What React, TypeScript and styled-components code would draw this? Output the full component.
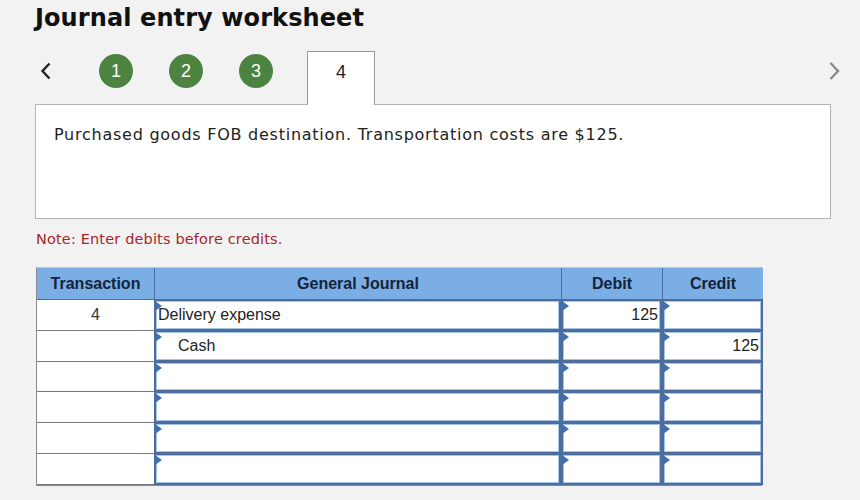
import styled, { createGlobalStyle } from 'styled-components';

const GlobalStyle = createGlobalStyle`
    html, body {
        margin: 0;
        padding: 0;
        background: #f2f2f2;
    }
    body {
        font-family: 'DejaVu Sans', Verdana, sans-serif;
        color: #1a1a1a;
    }
`;

const Page = styled.div`
    width: 860px;
    height: 500px;
    padding: 3px 29px 0 35px;
    box-sizing: border-box;
    overflow: hidden;
`;

const Title = styled.h1`
    margin: 0;
    font-size: 24px;
    font-weight: bold;
    line-height: 30px;
    color: #111;
    letter-spacing: 0.1px;
`;

const NavRow = styled.div`
    display: flex;
    align-items: flex-start;
    height: 54px;
    margin-top: 18px;
    margin-right: -14px;
    position: relative;
    z-index: 1;
`;

const Arrow = styled.button<{ $muted?: boolean }>`
    border: none;
    background: none;
    padding: 0;
    width: 22px;
    height: 24px;
    margin-top: 8px;
    display: flex;
    align-items: center;
    justify-content: center;
    color: ${p => (p.$muted ? '#8a8a8a' : '#222')};
`;

const Steps = styled.div`
    display: flex;
    gap: 36px;
    margin-left: 42px;
    margin-top: 3px;
`;

const StepCircle = styled.div`
    width: 34px;
    height: 34px;
    border-radius: 50%;
    background: #4c8340;
    color: #fff;
    font-family: 'Liberation Sans', Arial, sans-serif;
    font-size: 18px;
    display: flex;
    align-items: center;
    justify-content: center;
`;

const ActiveTab = styled.div`
    width: 68px;
    height: 54px;
    margin-left: 34px;
    box-sizing: border-box;
    background: #fff;
    border: 1px solid #9a9a9a;
    border-bottom: none;
    font-family: 'Liberation Sans', Arial, sans-serif;
    font-size: 18px;
    color: #222;
    display: flex;
    justify-content: center;
    padding-top: 10px;
`;

const Spacer = styled.div`
    flex: 1;
`;

const Prompt = styled.div`
    margin-top: -1px;
    height: 115px;
    box-sizing: border-box;
    background: #fff;
    border: 1px solid #b4b4b4;
    padding: 20px 18px;
    font-size: 16px;
    letter-spacing: 0.75px;
    color: #222;
`;

const Note = styled.p`
    margin: 10px 0 0 1px;
    font-size: 14.5px;
    letter-spacing: 0.15px;
    color: #a3282a;
    line-height: 20px;
`;

const Table = styled.div`
    margin-top: 18px;
    margin-left: 1px;
    width: 726px;
    display: grid;
    grid-template-columns: 117px 407px 101px 101px;
    grid-template-rows: 32px repeat(6, 30.8px);
    border: 1px solid #8a8a8a;
    border-top-color: #c8c8c8;
    box-sizing: border-box;
    background: #fff;
    font-family: 'Liberation Sans', Arial, sans-serif;
`;

const HeadCell = styled.div`
    background: #7aaee5;
    border-left: 1px solid #4a6f9c;
    border-bottom: 1px solid #4a6f9c;
    &:first-child {
        border-left: none;
    }
    font-weight: bold;
    font-size: 16px;
    color: #14233a;
    display: flex;
    align-items: center;
    justify-content: center;
`;

const TxCell = styled.div`
    border-bottom: 1px solid #777;
    font-size: 16px;
    color: #333;
    display: flex;
    align-items: center;
    justify-content: center;
`;

const InputCell = styled.div<{ $align: 'left' | 'right'; $indent?: boolean }>`
    position: relative;
    border: 2px solid #4d6e9c;
    border-top-width: 1px;
    box-shadow: inset 0 0 0 1px #a6c4e8;
    background: #fff;
    font-size: 16px;
    color: #222;
    display: flex;
    align-items: center;
    justify-content: ${p => (p.$align === 'right' ? 'flex-end' : 'flex-start')};
    padding: 1px ${p => (p.$align === 'right' ? '2px' : '0')} 0
        ${p => (p.$indent ? '22px' : '2px')};
    &::before {
        content: '';
        position: absolute;
        left: -1px;
        top: 0;
        border-top: 5px solid transparent;
        border-bottom: 5px solid transparent;
        border-left: 7px solid #3f6fae;
    }
`;

const Chevron = ({ dir }: { dir: 'left' | 'right' }) => (
    <svg width="14" height="22" viewBox="0 0 14 22">
        <path
            d={dir === 'left' ? 'M10.5 3.5 L3.5 11 L10.5 18.5' : 'M3.5 3 L11 11 L3.5 19'}
            fill="none"
            stroke="currentColor"
            strokeWidth="2.4"
        />
    </svg>
);

type Line = { tx: string; account: string; debit: string; credit: string; indent?: boolean };

const lines: Line[] = [
    { tx: '4', account: 'Delivery expense', debit: '125', credit: '' },
    { tx: '', account: 'Cash', debit: '', credit: '125', indent: true },
    { tx: '', account: '', debit: '', credit: '' },
    { tx: '', account: '', debit: '', credit: '' },
    { tx: '', account: '', debit: '', credit: '' },
    { tx: '', account: '', debit: '', credit: '' }
];

const App = () => {
    return (
        <>
            <GlobalStyle />
            <Page>
                <Title>Journal entry worksheet</Title>
                <NavRow>
                    <Arrow aria-label="previous">
                        <Chevron dir="left" />
                    </Arrow>
                    <Steps>
                        <StepCircle>1</StepCircle>
                        <StepCircle>2</StepCircle>
                        <StepCircle>3</StepCircle>
                    </Steps>
                    <ActiveTab>4</ActiveTab>
                    <Spacer />
                    <Arrow $muted aria-label="next">
                        <Chevron dir="right" />
                    </Arrow>
                </NavRow>
                <Prompt>Purchased goods FOB destination. Transportation costs are $125.</Prompt>
                <Note>Note: Enter debits before credits.</Note>
                <Table>
                    <HeadCell>Transaction</HeadCell>
                    <HeadCell>General Journal</HeadCell>
                    <HeadCell>Debit</HeadCell>
                    <HeadCell>Credit</HeadCell>
                    {lines.map((l, i) => (
                        <>
                            <TxCell key={`t${i}`}>{l.tx}</TxCell>
                            <InputCell key={`a${i}`} $align="left" $indent={l.indent}>
                                {l.account}
                            </InputCell>
                            <InputCell key={`d${i}`} $align="right">
                                {l.debit}
                            </InputCell>
                            <InputCell key={`c${i}`} $align="right">
                                {l.credit}
                            </InputCell>
                        </>
                    ))}
                </Table>
            </Page>
        </>
    );
};

export default App;
